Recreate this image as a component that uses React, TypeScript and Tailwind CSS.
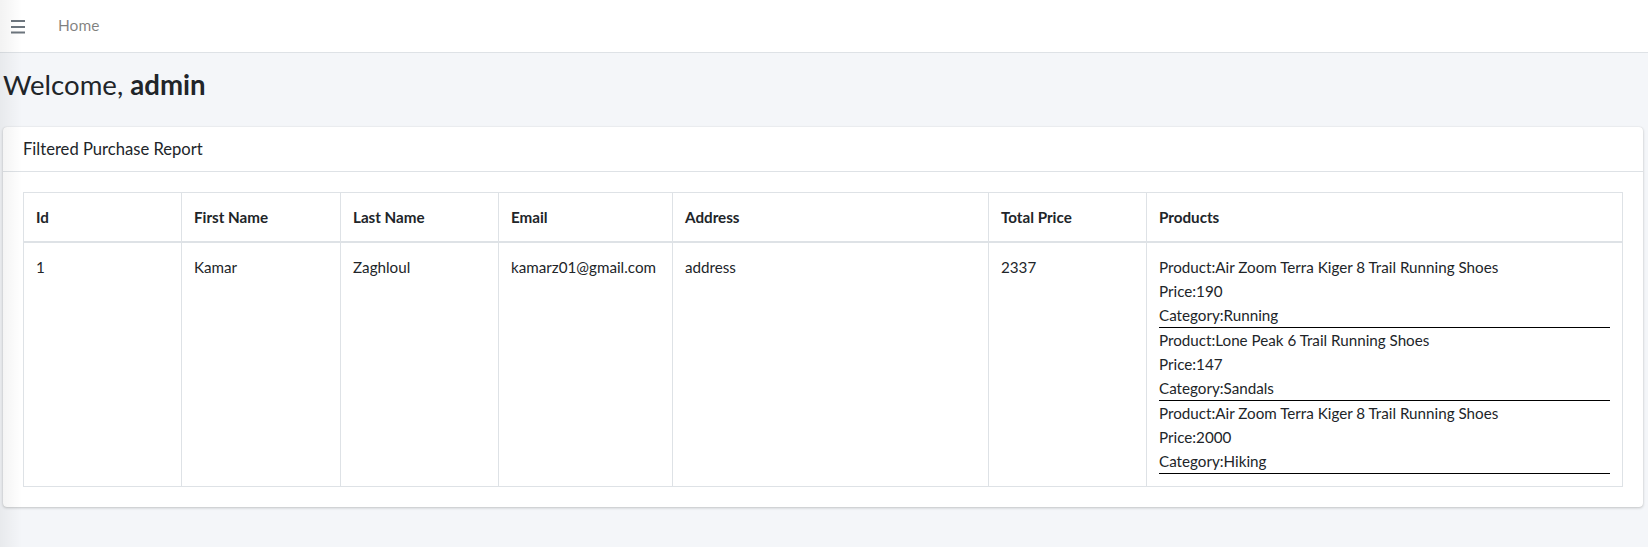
import React from "react";

const products = [
  { name: "Air Zoom Terra Kiger 8 Trail Running Shoes", price: 190, category: "Running" },
  { name: "Lone Peak 6 Trail Running Shoes", price: 147, category: "Sandals" },
  { name: "Air Zoom Terra Kiger 8 Trail Running Shoes", price: 2000, category: "Hiking" },
];

const columns = [
  { label: "Id", w: "w-[158px]" },
  { label: "First Name", w: "w-[159px]" },
  { label: "Last Name", w: "w-[158px]" },
  { label: "Email", w: "w-[174px]" },
  { label: "Address", w: "w-[316px]" },
  { label: "Total Price", w: "w-[158px]" },
  { label: "Products", w: "" },
];

function Bars() {
  return (
    <svg width="14" height="14" viewBox="0 0 14 14" className="text-[#6c757d]">
      <rect x="0" y="0" width="14" height="2" fill="currentColor" />
      <rect x="0" y="6" width="14" height="2" fill="currentColor" />
      <rect x="0" y="11.5" width="14" height="2" fill="currentColor" />
    </svg>
  );
}

export default function App() {
  return (
    <div
      className="relative min-h-[547px] bg-[#f4f6f9] text-[#212529] text-[15.2px] leading-[24px]"
      style={{ fontFamily: '"Source Sans Pro", Lato, "Noto Sans", sans-serif' }}
    >
      {/* sidebar shadow spilling over the left edge */}
      <div className="pointer-events-none absolute left-0 top-0 h-full w-[22px] bg-gradient-to-r from-black/[0.05] to-transparent" />

      {/* top navbar */}
      <nav className="h-[53px] bg-white border-b border-[#dee2e6] flex items-center">
        <div className="pl-[11px] pt-[1px]">
          <Bars />
        </div>
        <a className="ml-[33px] mb-[2px] text-black/50 text-[15.5px]">Home</a>
      </nav>

      {/* content header */}
      <div className="pl-[3px] pt-[15px] pb-[25px]">
        <h1 className="text-[27.6px] leading-[34px] font-normal">
          Welcome, <b className="font-bold">admin</b>
        </h1>
      </div>

      {/* card */}
      <div className="mx-[3px] mr-[5px] bg-white rounded-[4px] shadow-[0_0_1px_rgba(0,0,0,0.125),0_1px_3px_rgba(0,0,0,0.2)]">
        <div className="px-[20px] py-[12px] border-b border-[#dee2e6]">
          <h3 className="text-[16.6px] leading-[20px]">Filtered Purchase Report</h3>
        </div>
        <div className="p-[20px]">
          <table className="w-full table-fixed border-collapse border border-[#dee2e6]">
            <thead>
              <tr>
                {columns.map((c) => (
                  <th
                    key={c.label}
                    className={`${c.w} border border-[#dee2e6] border-b-2 p-[12px] text-left font-bold align-bottom`}
                  >
                    {c.label}
                  </th>
                ))}
              </tr>
            </thead>
            <tbody>
              <tr>
                <td className="border border-[#dee2e6] p-[12px] align-top">1</td>
                <td className="border border-[#dee2e6] p-[12px] align-top">Kamar</td>
                <td className="border border-[#dee2e6] p-[12px] align-top">Zaghloul</td>
                <td className="border border-[#dee2e6] p-[12px] align-top">kamarz01@gmail.com</td>
                <td className="border border-[#dee2e6] p-[12px] align-top">address</td>
                <td className="border border-[#dee2e6] p-[12px] align-top">2337</td>
                <td className="border border-[#dee2e6] p-[12px] align-top">
                  {products.map((p, i) => (
                    <div key={i} className="border-b border-black">
                      <div>Product:{p.name}</div>
                      <div>Price:{p.price}</div>
                      <div>Category:{p.category}</div>
                    </div>
                  ))}
                </td>
              </tr>
            </tbody>
          </table>
        </div>
      </div>
    </div>
  );
}
